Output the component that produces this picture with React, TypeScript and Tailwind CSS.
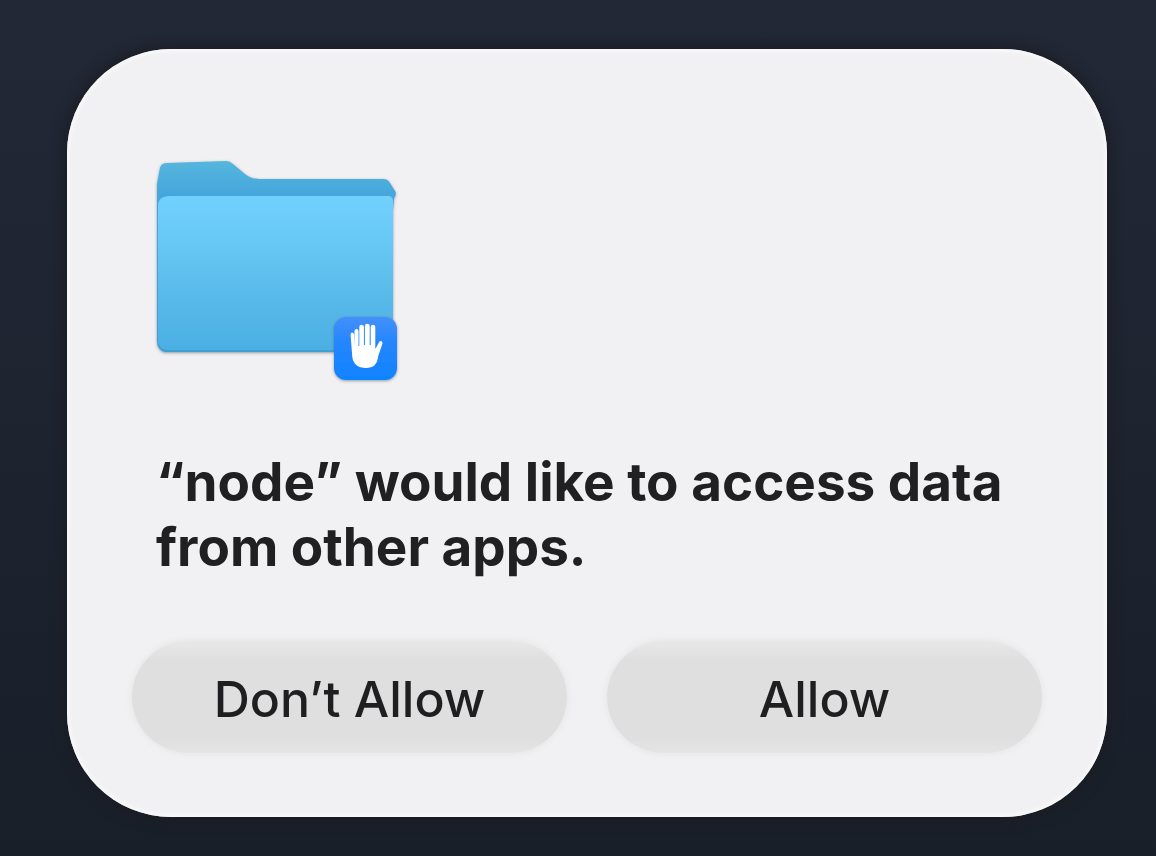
function FolderIcon() {
  return (
    <svg viewBox="0 0 260 240" className="h-[240px] w-[260px]" role="img" aria-label="Folder access">
      <defs>
        <linearGradient id="back" x1="0" y1="0" x2="0" y2="1">
          <stop offset="0" stopColor="#56b6de" />
          <stop offset="0.18" stopColor="#45a6dc" />
          <stop offset="1" stopColor="#3f9fd2" />
        </linearGradient>
        <linearGradient id="front" x1="0" y1="0" x2="0" y2="1">
          <stop offset="0" stopColor="#72d0ff" />
          <stop offset="0.3" stopColor="#68c8f5" />
          <stop offset="0.65" stopColor="#58bae9" />
          <stop offset="1" stopColor="#4cafe4" />
        </linearGradient>
        <linearGradient id="badge" x1="0" y1="0" x2="0" y2="1">
          <stop offset="0" stopColor="#4390fb" />
          <stop offset="0.4" stopColor="#2586fe" />
          <stop offset="1" stopColor="#0f83ff" />
        </linearGradient>
        <filter id="shadow" x="-10%" y="-10%" width="120%" height="125%">
          <feDropShadow dx="0" dy="1" stdDeviation="1.5" floodColor="#405060" floodOpacity="0.55" />
        </filter>
      </defs>
      <g filter="url(#shadow)">
        <path
          d="M10 18Q11 13 17 13L76 11Q80 11 83 14L95 24Q101 29 109 29H233Q238 29 240 33L245 41Q247 44 244 48L243 60V197Q243 202 237 202H15Q7 200 7 191V34Z"
          fill="url(#back)"
        />
        <path d="M8 56Q8 46 20 46H239Q243 46 243 52V195Q243 200 237 200H17Q8 199 8 190Z" fill="url(#front)" />
      </g>
      <rect x="184" y="167" width="63" height="63" rx="12" fill="url(#badge)" filter="url(#shadow)" />
      <path
        transform="translate(1 1)"
        d="M203.500 195V180q0-2 2-2t2 2v15h.8V176q0-2.300 2.300-2.300t2.300 2.300v18h1V175q0-2.300 2.400-2.300t2.400 2.300v19h1V176q0-2.200 2.300-2.200t2.300 2.200v22l3.600-6.500q1-2 2.600-1.300 1.500 .8 .8 2.800l-4.200 12.500Q226 217 215 217 203 217 201.300 206L199.600 184q-.1-2.300 1.500-2.400 1.800 0 2 2.200Z"
        fill="#fff"
      />
    </svg>
  );
}

const buttonClass =
  "h-28 min-w-0 flex-1 rounded-full bg-[linear-gradient(180deg,#e8e8e9_0%,#dfdfe0_16%,#dfdfe0_88%,#e5e5e6_100%)] pt-1 text-[50px] leading-[64px] font-medium text-[#1f1f21] shadow-[0_0_6px_1px_#e6e6e7]";

export default function App() {
  return (
    <main className="flex min-h-screen bg-[linear-gradient(180deg,#222836_0%,#1e2430_45%,#191f29_100%)] pt-[49px] pr-[49px] pb-[39px] pl-[67px] font-['Inter',sans-serif]">
      <section
        role="dialog"
        aria-labelledby="title"
        className="flex flex-1 flex-col rounded-[104px] bg-[#f1f1f3] px-[65px] pt-[101px] pb-16 shadow-[0_0_14px_2px_#1a1c22,inset_0_0_4px_2px_#fafafb]"
      >
        <div className="px-[18px]">
          <FolderIcon />
        </div>
        <h1 id="title" className="mt-[60px] px-6 text-[53px] leading-[65px] font-bold text-[#202022]">
          “node” would like to access data from other apps.
        </h1>
        <div className="mt-auto flex gap-10">
          <button type="button" className={buttonClass}>
            Don’t Allow
          </button>
          <button type="button" className={buttonClass}>
            Allow
          </button>
        </div>
      </section>
    </main>
  );
}
